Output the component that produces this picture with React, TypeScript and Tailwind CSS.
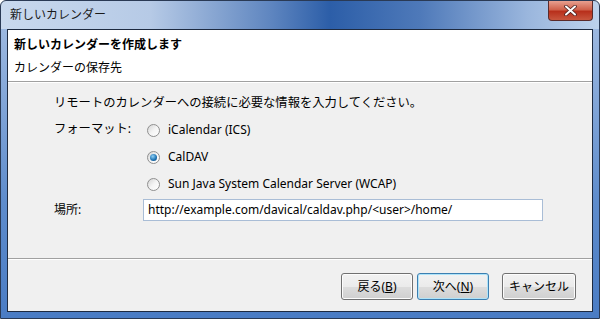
import React from 'react';

const font = { fontFamily: '"Noto Sans", "Noto Sans CJK JP", sans-serif' };

const Radio = ({ checked = false }: { checked?: boolean }) => (
  <span className="relative w-[13px] h-[13px] rounded-full border border-[#8f8f8f] bg-gradient-to-br from-[#d4d4d4] via-[#f4f4f4] to-[#ffffff] flex items-center justify-center shrink-0">
    {checked && (
      <span className="w-[7px] h-[7px] rounded-full bg-[radial-gradient(circle_at_40%_35%,#8fd0f5,#1a6fb0_60%,#0b3f70)]"></span>
    )}
  </span>
);

const Button = ({ label, accel, rest, primary = false }: { label: string; accel: string; rest: string; primary?: boolean }) => (
  <button
    className={`w-full h-[27px] rounded-[3px] border text-[12px] text-black flex items-center justify-center bg-[linear-gradient(#f2f2f2_0%,#ebebeb_50%,#dddddd_51%,#cfcfcf_100%)] ${
      primary ? 'border-[#3c7fb1] shadow-[inset_0_0_0_1px_#aee3f9]' : 'border-[#707070] shadow-[inset_0_0_0_1px_#fcfcfc]'
    }`}
  >
    {label}
    {accel && <span className="underline">{accel}</span>}
    {rest}
  </button>
);

export default function App() {
  return (
    <div className="w-[600px] h-[319px] text-[12px] text-black overflow-hidden" style={font}>
      <div className="w-full h-full flex flex-col rounded-t-[6px] border border-[#2a3a55] bg-[linear-gradient(90deg,#c9d9ee_0%,#b6cae6_25%,#5f86c0_45%,#2c5ea8_55%,#4e79b9_70%,#9ab6dd_88%,#bdd2ec_100%)]">
        {/* Title bar */}
        <div className="h-[28px] flex items-start justify-between">
          <span className="pl-[9px] pt-[5px] text-[12px] text-[#1a1a1a]">新しいカレンダー</span>
          <div className="mr-[6px] w-[45px] h-[20px] rounded-b-[4px] border border-t-0 border-[#5a2a2a] bg-[linear-gradient(#e8a090_0%,#d0624c_45%,#b8301c_55%,#c8563e_100%)] flex items-center justify-center">
            <svg width="13" height="11" viewBox="0 0 13 11">
              <path d="M2 1.5 L11 9.5 M11 1.5 L2 9.5" stroke="#4a2020" strokeWidth="3.6" strokeLinecap="round" />
              <path d="M2 1.5 L11 9.5 M11 1.5 L2 9.5" stroke="#ffffff" strokeWidth="2" strokeLinecap="round" />
            </svg>
          </div>
        </div>

        {/* Frame sides */}
        <div className="flex-1 px-[6px] pb-[6px] bg-[linear-gradient(#9cb8e0,#5e8ccc_60%,#4a7cc4)]">
          <div className="w-full h-full flex flex-col border border-[#1d2a40] bg-[#f0f0f0]">
            {/* Header */}
            <div className="h-[52px] bg-white border-b border-[#a0a0a0] flex flex-col pl-[6px] pt-[5px]">
              <span className="font-bold text-[12px] leading-[20px]">新しいカレンダーを作成します</span>
              <span className="text-[12px] leading-[20px] mt-[3px]">カレンダーの保存先</span>
            </div>
            <div className="h-px bg-white"></div>

            {/* Body */}
            <div className="h-[175px] pl-[46px] pt-[11px] flex flex-col">
              <span className="leading-[18px] text-[12.3px]">リモートのカレンダーへの接続に必要な情報を入力してください。</span>
              <div className="flex mt-[8px]">
                <span className="w-[93px] leading-[18px] text-[12.3px]">フォーマット:</span>
                <div className="flex flex-col gap-[9px] pt-[1px]">
                  <label className="flex items-center gap-[8px] leading-[18px]">
                    <Radio />
                    iCalendar (ICS)
                  </label>
                  <label className="flex items-center gap-[8px] leading-[18px]">
                    <Radio checked />
                    CalDAV
                  </label>
                  <label className="flex items-center gap-[8px] leading-[18px]">
                    <Radio />
                    Sun Java System Calendar Server (WCAP)
                  </label>
                </div>
              </div>
              <div className="flex items-center mt-[6px]">
                <span className="w-[89px]">場所:</span>
                <div className="w-[400px] h-[22px] border border-[#a9bdd6] bg-white flex items-center px-[4px]">
                  http://example.com/davical/caldav.php/&lt;user&gt;/home/
                </div>
              </div>
            </div>

            <div className="h-px bg-[#a0a0a0]"></div>
            <div className="h-px bg-white"></div>

            {/* Buttons */}
            <div className="flex-1 flex items-start justify-end pt-[13px] pr-[16px]">
              <div className="w-[72px]">
                <Button label="戻る(" accel="B" rest=")" />
              </div>
              <div className="w-[72px] ml-[4px]">
                <Button label="次へ(" accel="N" rest=")" primary />
              </div>
              <div className="w-[74px] ml-[13px]">
                <Button label="キャンセル" accel="" rest="" />
              </div>
            </div>
          </div>
        </div>
      </div>
    </div>
  );
}
